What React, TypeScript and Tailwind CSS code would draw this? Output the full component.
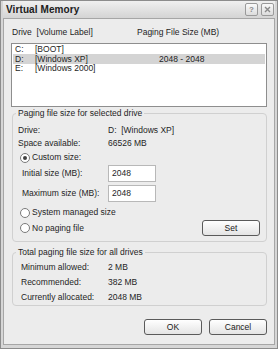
const font = "font-['Liberation_Sans',Arial,sans-serif]";

function Radio({ checked = false }: { checked?: boolean }) {
  return (
    <span className="w-[10px] h-[10px] rounded-full border border-[#7a7a7a] bg-white flex items-center justify-center shrink-0">
      {checked && <span className="w-[4px] h-[4px] rounded-full bg-[#404040]" />}
    </span>
  );
}

function Button({ label, w }: { label: string; w: string }) {
  return (
    <button
      className={`${w} h-[16px] rounded-[3px] border border-[#5a5a5a] bg-gradient-to-b from-white to-[#e4e4e4] text-[8.5px] text-[#202020] leading-none`}
    >
      {label}
    </button>
  );
}

export default function App() {
  const drives = [
    { d: "C:", label: "[BOOT]", size: "" },
    { d: "D:", label: "[Windows XP]", size: "2048 - 2048", sel: true },
    { d: "E:", label: "[Windows 2000]", size: "" },
  ];
  return (
    <div className={`${font} w-[278px] h-[349px] bg-[#d6d6d6] border border-[#8c8c8c] flex flex-col px-[2px] pb-[3px] text-[#1e1e1e]`}>
      {/* title bar */}
      <div className="h-[17px] flex items-center justify-between pl-[3px] pr-[1px] bg-gradient-to-b from-[#f0f0f0] to-[#d4d4d4]">
        <span className="text-[10px] font-bold tracking-[0.1px] text-[#202020]">Virtual Memory</span>
        <div className="flex gap-[3px]">
          <span className="w-[13px] h-[13px] rounded-[2px] border border-[#9a9a9a] bg-gradient-to-b from-[#fafafa] to-[#dcdcdc] flex items-center justify-center text-[8px] font-bold text-[#8a8a8a] leading-none">?</span>
          <span className="w-[13px] h-[13px] rounded-[2px] border border-[#9a9a9a] bg-gradient-to-b from-[#fafafa] to-[#dcdcdc] flex items-center justify-center">
            <svg width="7" height="7" viewBox="0 0 7 7">
              <path d="M1 1L6 6M6 1L1 6" stroke="#8a8a8a" strokeWidth="1.4" />
            </svg>
          </span>
        </div>
      </div>
      {/* body */}
      <div className="flex-1 bg-[#ececec] border border-[#a6a6a6] flex flex-col px-[7px] text-[8.5px] leading-[11px]">
        <div className="h-[11px] mt-[8px] flex">
          <span className="pl-[1px] w-[126px]">Drive&nbsp; [Volume Label]</span>
          <span>Paging File Size (MB)</span>
        </div>
        <div className="mt-[5px] h-[64px] bg-white border border-[#8e8e8e] px-[1px] pt-[0.5px]">
          {drives.map((r) => (
            <div key={r.d} className={`h-[9.5px] flex items-center leading-none ${r.sel ? "bg-[#d4d4d4]" : ""}`}>
              <span className="w-[22px] pl-[2px]">{r.d}</span>
              <span className="w-[124px]">{r.label}</span>
              <span>{r.size}</span>
            </div>
          ))}
        </div>

        <fieldset className="mt-[1px] h-[134px] border border-[#d0d0d0] rounded-[4px] ml-[1px] pl-[5px]">
          <legend className="ml-[-2px] px-[2px] leading-[11px]">Paging file size for selected drive</legend>
          <div className="flex h-[13px] items-center mt-[5px]">
            <span className="w-[90px]">Drive:</span>
            <span>D:&nbsp; [Windows XP]</span>
          </div>
          <div className="flex h-[13px] items-center">
            <span className="w-[90px]">Space available:</span>
            <span>66526 MB</span>
          </div>
          <div className="flex h-[15px] items-center gap-[2px] pl-[2px]">
            <Radio checked />
            <span>Custom size:</span>
          </div>
          <div className="flex items-center h-[17px]">
            <span className="w-[90px] pl-[4px]">Initial size (MB):</span>
            <span className="w-[48px] h-[17px] bg-white border border-[#b8b8b8] pl-[3px] flex items-center">2048</span>
          </div>
          <div className="flex items-center h-[17px] mt-[3px]">
            <span className="w-[90px] pl-[4px]">Maximum size (MB):</span>
            <span className="w-[48px] h-[17px] bg-white border border-[#b8b8b8] pl-[3px] flex items-center">2048</span>
          </div>
          <div className="flex h-[15px] items-center gap-[2px] mt-[3px] pl-[2px]">
            <Radio />
            <span>System managed size</span>
          </div>
          <div className="flex h-[16px] items-center pl-[2px] pr-[6px]">
            <div className="flex items-center gap-[2px] flex-1">
              <Radio />
              <span>No paging file</span>
            </div>
            <Button label="Set" w="w-[58px]" />
          </div>
        </fieldset>

        <fieldset className="mt-[5px] h-[59px] border border-[#d0d0d0] rounded-[4px] ml-[1px] pl-[8px]">
          <legend className="ml-[-5px] px-[2px] leading-[11px]">Total paging file size for all drives</legend>
          <div className="flex h-[15px] items-center mt-[2px]">
            <span className="w-[87px]">Minimum allowed:</span>
            <span>2 MB</span>
          </div>
          <div className="flex h-[15px] items-center">
            <span className="w-[87px]">Recommended:</span>
            <span>382 MB</span>
          </div>
          <div className="flex h-[15px] items-center">
            <span className="w-[87px]">Currently allocated:</span>
            <span>2048 MB</span>
          </div>
        </fieldset>

        <div className="mt-[13px] flex justify-end gap-[7px] pr-[0px]">
          <Button label="OK" w="w-[58px]" />
          <Button label="Cancel" w="w-[58px]" />
        </div>
      </div>
    </div>
  );
}
